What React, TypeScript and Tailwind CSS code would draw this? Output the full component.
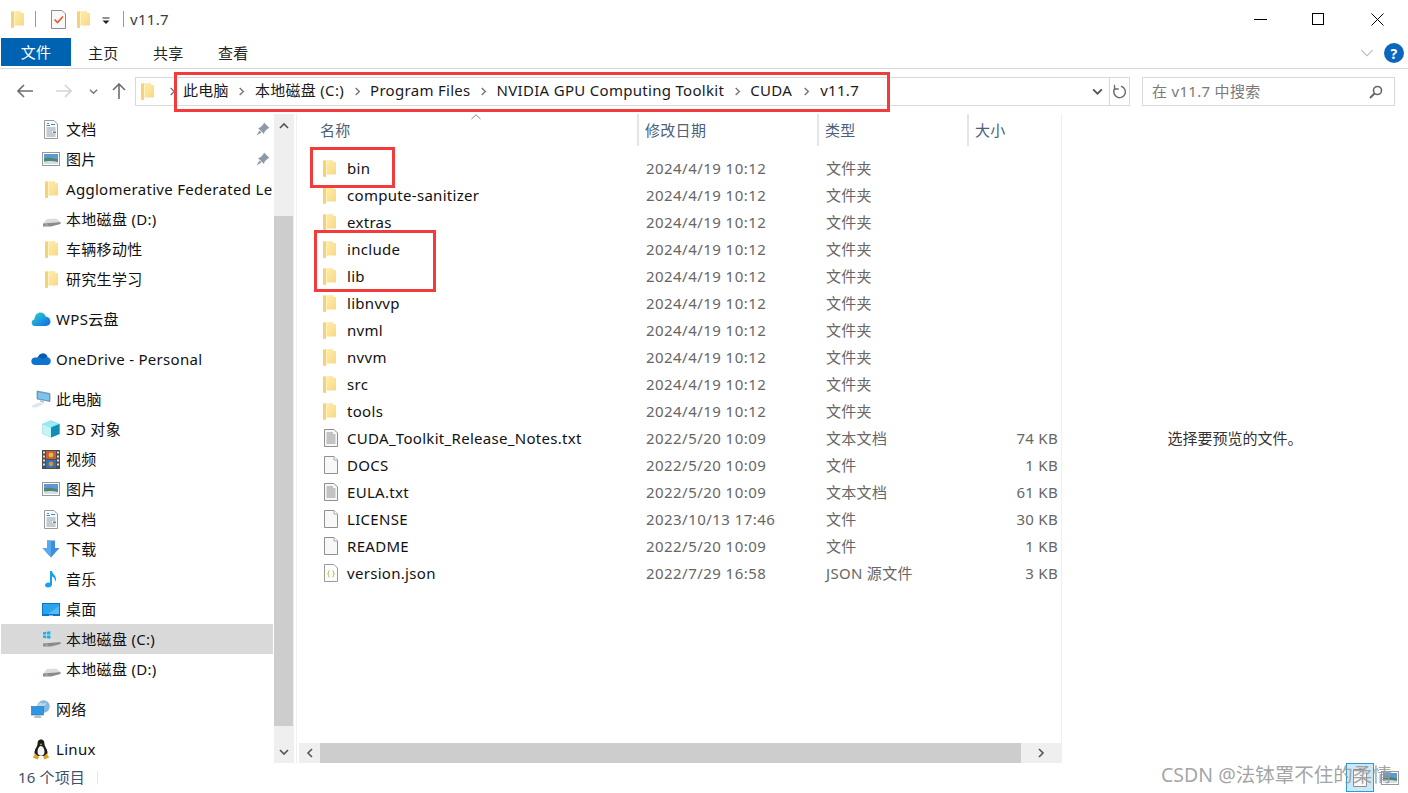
import React from "react";

const Folder = ({ className = "" }: { className?: string }) => (
  <svg width="13" height="17" viewBox="0 0 13 17" className={className}>
    <defs>
      <linearGradient id="fld" x1="0" x2="1" y1="0" y2="1">
        <stop offset="0" stopColor="#fff0b4" />
        <stop offset="1" stopColor="#f7d77f" />
      </linearGradient>
    </defs>
    <path d="M0 .6L9.5 0L10.2 2H13V14.5H3V17L0 16.4Z" fill="url(#fld)" />
    <path d="M0 .6L3 .4V17L0 16.4Z" fill="#f4d27a" />
    <path d="M3 1.5H4V14.5H3Z" fill="#fff3c4" />
  </svg>
);

const DocLines = () => (
  <svg width="16" height="18" viewBox="0 0 16 18">
    <path d="M1.5.5H11L14.5 4V17.5H1.5Z" fill="#f7f7f7" stroke="#8f8f8f" />
    <path d="M3.5 4H10M3.5 6H12.5M3.5 8H12.5M3.5 10H12.5M3.5 12H12.5M3.5 14H12.5" stroke="#8e8e8e" />
  </svg>
);
const DocBlank = () => (
  <svg width="16" height="18" viewBox="0 0 16 18">
    <path d="M1.5.5H11L14.5 4V17.5H1.5Z" fill="#f8f8f8" stroke="#8f8f8f" />
    <path d="M11 .5V4H14.5" fill="#fff" stroke="#a8a8a8" />
  </svg>
);
const DocJson = () => (
  <svg width="16" height="18" viewBox="0 0 16 18">
    <path d="M1.5.5H11L14.5 4V17.5H1.5Z" fill="#fdfdfd" stroke="#9a9a9a" />
    <path d="M6.5 6.5C5.2 6.5 5.6 8 5.5 9C5.4 9.6 5 9.8 4.6 9.8C5 9.9 5.4 10.1 5.5 10.7C5.6 11.7 5.2 13 6.5 13M9.5 6.5C10.8 6.5 10.4 8 10.5 9C10.6 9.6 11 9.8 11.4 9.8C11 9.9 10.6 10.1 10.5 10.7C10.4 11.7 10.8 13 9.5 13" fill="none" stroke="#b8bf3d" />
  </svg>
);
const NavDoc = () => (
  <svg width="16" height="19" viewBox="0 0 16 19">
    <path d="M1.5.5H11L14.5 4V18.5H1.5Z" fill="#fbfbfb" stroke="#9a9a9a" />
    <path d="M4 3.5H6M3.5 5.5H7M8 4.5H12" stroke="#2f8fd8" />
    <path d="M3.5 8H12.5M3.5 10H12.5M3.5 12H9M3.5 14H12.5M3.5 16H12.5" stroke="#8f9aa5" />
    <path d="M10 11.5h3v1.5h-3z" fill="#3c9a8c" />
  </svg>
);
const NavPic = () => (
  <svg width="18" height="14" viewBox="0 0 18 14">
    <rect x=".5" y=".5" width="17" height="13" fill="#fff" stroke="#999" />
    <rect x="2" y="2" width="14" height="10" fill="#5b9bd0" />
    <path d="M2 6.5C6 5 9 5.5 16 7.5V12H2Z" fill="#55816d" />
    <path d="M2 9.5C7 8.5 11 9 16 10V12H2Z" fill="#cfe0ea" />
  </svg>
);
const Drive = ({ win = false }: { win?: boolean }) => (
  <svg width="19" height="17" viewBox="0 0 19 17">
    <path d="M5 8L14 7.5L18.5 11L1 12.5Z" fill="#dcdcdc" />
    <path d="M1 12.5L18.5 11V13L9 15.5H1Z" fill="#8b8b8b" />
    <path d="M3 13.5h3v1H3z" fill="#7fd06f" />
    {win && <path d="M1 1.2L4.2.8V3.6H1ZM5 .7L8.4.2V3.6H5ZM1 4.4H4.2V7.2L1 6.8ZM5 4.4H8.4V7.8L5 7.3Z" fill="#12b2ee" />}
  </svg>
);
const Cloud = () => (
  <svg width="20" height="16" viewBox="0 0 20 16">
    <defs>
      <linearGradient id="wps" x1="0" x2="1" y1="0" y2="1">
        <stop offset="0" stopColor="#2ad7c8" />
        <stop offset="1" stopColor="#1466e8" />
      </linearGradient>
    </defs>
    <path d="M4 15C1.5 15 .5 13 .7 11.2C.9 9.5 2 8.6 3.4 8.4C3.7 4.2 6.5 1.5 9.5 1.5C12.3 1.5 14 3.2 14.7 5.6C17.5 5.8 19.5 8 19.5 10.6C19.5 13.2 17.5 15 15 15Z" fill="url(#wps)" />
  </svg>
);
const OneDrive = () => (
  <svg width="20" height="13" viewBox="0 0 20 13">
    <path d="M7 4C8 1.5 10 .5 12 .5C14.5.5 16 2 16.5 4.2C18.5 4.5 19.8 6 19.8 8C19.8 10.5 18 12 16 12H4.5C2 12 .3 10.5.3 8.3C.3 6 2 4.5 4 4.5C5.2 4.5 6.2 4.6 7 4Z" fill="#0f74cc" />
    <path d="M7 4C8 1.5 10 .5 12 .5C14.5.5 16 2 16.5 4.2C14.5 4.2 13 5 12 6.5C10.5 5 9 4 7 4Z" fill="#0a5cae" />
  </svg>
);
const PC = () => (
  <svg width="20" height="18" viewBox="0 0 20 18">
    <path d="M6 1L19 3.5V11.5L6 9Z" fill="#5aa6dd" stroke="#6f8596" strokeWidth=".7" />
    <path d="M7 2.3L18 4.4V10.4L7 8.3Z" fill="#7cc3ef" />
    <path d="M1 15.5L8 12.5L13 14L5 17.5H1.5Z" fill="#e2e5e8" />
    <path d="M9 10L13 11V13L9 12Z" fill="#c3c9ce" />
  </svg>
);
const Cube = () => (
  <svg width="18" height="18" viewBox="0 0 18 18">
    <path d="M9 .5L17.5 4V14L9 17.5L.5 14V4Z" fill="#35bcd6" />
    <path d="M9 .5L17.5 4L9 7.5L.5 4Z" fill="#9aebf2" />
    <path d="M.5 4L9 7.5V17.5L.5 14Z" fill="#c8f3f5" />
    <path d="M9 7.5L17.5 4V14L9 17.5Z" fill="#0f8fb5" />
  </svg>
);
const Film = () => (
  <svg width="18" height="19" viewBox="0 0 18 19">
    <rect width="18" height="19" fill="#4d4d4d" />
    <path d="M1 1.5h2v2H1zM1 5.5h2v2H1zM1 9.5h2v2H1zM1 13.5h2v2H1zM15 1.5h2v2h-2zM15 5.5h2v2h-2zM15 9.5h2v2h-2zM15 13.5h2v2h-2z" fill="#ddd" />
    <rect x="4" y="1" width="10" height="8" fill="#c95e3d" />
    <rect x="4" y="10" width="10" height="8" fill="#2f73b6" />
    <circle cx="9" cy="5" r="2.4" fill="#e4bb3e" />
    <circle cx="9" cy="14" r="2.4" fill="#d98c39" />
  </svg>
);
const Download = () => (
  <svg width="18" height="18" viewBox="0 0 18 18">
    <path d="M5 .5H13V8H17.5L9 17.5L.5 8H5Z" fill="#3b8fdc" />
    <path d="M5 .5H9V17.5L.5 8H5Z" fill="#59a9ec" />
  </svg>
);
const Music = () => (
  <svg width="14" height="18" viewBox="0 0 14 18">
    <path d="M6 1H8C8.3 4 12 5 12 9C12 10 11.7 11 11 11.5C11.3 8.5 9.5 7 8 6.5V14.5C8 16.3 6 17.5 4 17.5C2.3 17.5 1 16.6 1 15.3C1 13.8 2.7 12.6 4.5 12.6C5 12.6 5.6 12.7 6 13Z" fill="#18a0ee" />
  </svg>
);
const Desktop = () => (
  <svg width="18" height="13" viewBox="0 0 18 13">
    <rect width="18" height="13" fill="#0b76c8" />
    <rect x="1" y="1" width="16" height="10" fill="#2ba4ee" />
    <path d="M17 3L6 11H17Z" fill="#55bcf4" />
    <path d="M7 12h4v.6H7z" fill="#d3ecfb" />
  </svg>
);
const Network = () => (
  <svg width="20" height="19" viewBox="0 0 20 19">
    <circle cx="12.5" cy="6.5" r="6.2" fill="#7fb8e0" />
    <path d="M9 2C11 4 13 3.5 15 2.5C16 4.5 14 6 12 6C10.5 8 11 10 12.5 12.5C9 12 7 9 7 6.5C7 5 8 3 9 2Z" fill="#bcd8e8" />
    <rect x=".5" y="6.5" width="12" height="8.5" fill="#2f97e2" stroke="#1c70b5" strokeWidth=".6" />
    <path d="M4 15H9L10.5 18H3Z" fill="#b8bfc5" />
  </svg>
);
const Tux = () => (
  <svg width="18" height="21" viewBox="0 0 18 21">
    <path d="M9 .5C6.3.5 5.5 2.8 5.6 5C5.7 7 3 9.5 2.6 12.5C2.3 15 3 16 4 17H14C15 16 15.7 15 15.4 12.5C15 9.5 12.3 7 12.4 5C12.5 2.8 11.7.5 9 .5Z" fill="#1a1a1a" />
    <path d="M9 7C7 7 5.5 10 5.5 13C5.5 15.3 7 16.8 9 16.8C11 16.8 12.5 15.3 12.5 13C12.5 10 11 7 9 7Z" fill="#f4f4f4" />
    <path d="M7.5 4.8H10.5L9 6.5Z" fill="#dfa318" />
    <path d="M3.5 14.5L.8 18.5L5.5 20.5L7 18ZM14.5 14.5L17.2 18.5L12.5 20.5L11 18Z" fill="#dfa318" />
  </svg>
);

type Nav = { icon?: React.ReactNode; label: string; pin?: boolean; top?: boolean; gap?: boolean; sel?: boolean };
const nav: Nav[] = [
  { icon: <NavDoc />, label: "文档", pin: true },
  { icon: <NavPic />, label: "图片", pin: true },
  { icon: <Folder />, label: "Agglomerative Federated Le" },
  { icon: <Drive />, label: "本地磁盘 (D:)" },
  { icon: <Folder />, label: "车辆移动性" },
  { icon: <Folder />, label: "研究生学习" },
  { icon: <Cloud />, label: "WPS云盘", top: true, gap: true },
  { icon: <OneDrive />, label: "OneDrive - Personal", top: true, gap: true },
  { icon: <PC />, label: "此电脑", top: true, gap: true },
  { icon: <Cube />, label: "3D 对象" },
  { icon: <Film />, label: "视频" },
  { icon: <NavPic />, label: "图片" },
  { icon: <NavDoc />, label: "文档" },
  { icon: <Download />, label: "下载" },
  { icon: <Music />, label: "音乐" },
  { icon: <Desktop />, label: "桌面" },
  { icon: <Drive win />, label: "本地磁盘 (C:)", sel: true },
  { icon: <Drive />, label: "本地磁盘 (D:)" },
  { icon: <Network />, label: "网络", top: true, gap: true },
  { icon: <Tux />, label: "Linux", top: true, gap: true },
];

const folderNames = ["bin", "compute-sanitizer", "extras", "include", "lib", "libnvvp", "nvml", "nvvm", "src", "tools"];
const files: { icon: React.ReactNode; name: string; date: string; type: string; size: string }[] = [
  ...folderNames.map((n) => ({ icon: <Folder />, name: n, date: "2024/4/19 10:12", type: "文件夹", size: "" })),
  { icon: <DocLines />, name: "CUDA_Toolkit_Release_Notes.txt", date: "2022/5/20 10:09", type: "文本文档", size: "74 KB" },
  { icon: <DocBlank />, name: "DOCS", date: "2022/5/20 10:09", type: "文件", size: "1 KB" },
  { icon: <DocLines />, name: "EULA.txt", date: "2022/5/20 10:09", type: "文本文档", size: "61 KB" },
  { icon: <DocBlank />, name: "LICENSE", date: "2023/10/13 17:46", type: "文件", size: "30 KB" },
  { icon: <DocBlank />, name: "README", date: "2022/5/20 10:09", type: "文件", size: "1 KB" },
  { icon: <DocJson />, name: "version.json", date: "2022/7/29 16:58", type: "JSON 源文件", size: "3 KB" },
];

const crumbs = ["此电脑", "本地磁盘 (C:)", "Program Files", "NVIDIA GPU Computing Toolkit", "CUDA", "v11.7"];

const Chev = ({ d, c = "#666", w = 9, h = 9, sw = 1.6 }: { d: string; c?: string; w?: number; h?: number; sw?: number }) => (
  <svg width={w} height={h} viewBox="0 0 10 10">
    <path d={d} fill="none" stroke={c} strokeWidth={sw} />
  </svg>
);
const RIGHT = "M3 1L7 5L3 9";
const LEFT = "M7 1L3 5L7 9";
const UP = "M1 7L5 3L9 7";
const DOWN = "M1 3L5 7L9 3";

export default function App() {
  return (
    <div className="relative w-[1408px] h-[793px] overflow-hidden bg-white text-[15px] tracking-[0.3px] text-black font-['Noto_Sans','Noto_Sans_CJK_SC',sans-serif]">
      {/* title bar */}
      <div className="h-[38px] flex items-center">
        <div className="ml-[11px] w-[14px] flex"><Folder /></div>
        <div className="ml-[10px] w-px h-[16px] bg-[#9a9a9a]" />
        <div className="ml-[15px] flex">
          <svg width="15" height="19" viewBox="0 0 15 19">
            <path d="M.5.5H11L14.5 4V18.5H.5Z" fill="#f8f8f8" stroke="#8c8c8c" />
            <path d="M3.5 9.5L6.5 12.5L12 6.5" fill="none" stroke="#e8562a" strokeWidth="1.6" />
          </svg>
        </div>
        <div className="ml-[11px] flex"><Folder /></div>
        <svg width="8" height="8" viewBox="0 0 8 8" className="ml-[12px] mt-[3px]">
          <path d="M.5 1h7" stroke="#222" />
          <path d="M.5 3.5h7L4 7Z" fill="#222" />
        </svg>
        <div className="ml-[13px] w-px h-[16px] bg-[#9a9a9a]" />
        <span className="ml-[6px] text-[#3c3c3c]">v11.7</span>
        <div className="ml-auto flex items-center">
          <div className="w-[13px] h-px bg-black mr-[45px]" />
          <div className="w-[12px] h-[12px] border border-black mr-[47px]" />
          <svg width="13" height="13" viewBox="0 0 13 13" className="mr-[24px]">
            <path d="M.5.5L12.5 12.5M12.5.5L.5 12.5" stroke="#000" fill="none" />
          </svg>
        </div>
      </div>
      {/* ribbon */}
      <div className="h-[31px] border-b border-[#d9d9d9] flex items-start">
        <div className="ml-px w-[70px] h-[28px] bg-[#0063b1] text-white flex items-center justify-center">文件</div>
        <span className="ml-[17px] h-[28px] w-[30px] flex items-center pt-[3px] text-[#222] whitespace-nowrap">主页</span>
        <span className="ml-[35px] h-[28px] w-[30px] flex items-center pt-[3px] text-[#222] whitespace-nowrap">共享</span>
        <span className="ml-[35px] h-[28px] w-[30px] flex items-center pt-[3px] text-[#222] whitespace-nowrap">查看</span>
        <div className="ml-auto mt-[5px] mr-[4px] flex items-center">
          <Chev d={DOWN} c="#b5b5b5" w={14} h={14} sw={0.8} />
          <div className="ml-[10px] w-[20px] h-[20px] rounded-full bg-[#0b66bd] text-white text-[14px] font-bold flex items-center justify-center">?</div>
        </div>
      </div>
      {/* address row */}
      <div className="h-[45px] flex items-start pt-[8px]">
        <div className="w-[135px] h-[28px] flex items-center">
          <svg width="16" height="14" viewBox="0 0 16 14" className="ml-[17px]">
            <path d="M7 1L1 7L7 13M1 7H16" fill="none" stroke="#6d6d6d" strokeWidth="1.6" />
          </svg>
          <svg width="16" height="14" viewBox="0 0 16 14" className="ml-[23px]">
            <path d="M9 1L15 7L9 13M0 7H15" fill="none" stroke="#d5d5d5" strokeWidth="1.6" />
          </svg>
          <div className="ml-[17px] flex"><Chev d={DOWN} c="#777" /></div>
          <svg width="14" height="16" viewBox="0 0 14 16" className="ml-[14px]">
            <path d="M1 7L7 1L13 7M7 1V16" fill="none" stroke="#6d6d6d" strokeWidth="1.6" />
          </svg>
        </div>
        <div className="w-[995px] h-[29px] border border-[#d9d9d9] flex items-center relative">
          <div className="ml-[5px] flex"><Folder /></div>
          <div className="ml-[14px] flex"><Chev d={RIGHT} c="#777" /></div>
          <div className="ml-[6px] pb-[2px] flex items-center text-[#1a1a1a]">
            {crumbs.map((c, i) => (
              <React.Fragment key={c}>
                {i > 0 && <span className={`${i === 5 ? "w-[28px]" : "w-[26px]"} flex justify-center pt-[2px]`}><Chev d={RIGHT} c="#777" /></span>}
                <span className="whitespace-nowrap">{c}</span>
              </React.Fragment>
            ))}
          </div>
          <div className="ml-auto flex items-center h-full">
            <div className="mr-[6px] flex"><Chev d={DOWN} c="#555" w={11} h={11} /></div>
            <div className="w-[20px] h-full border-l border-[#d9d9d9] flex items-center justify-center">
              <svg width="15" height="15" viewBox="0 0 15 15">
                <path d="M9 2.2A5.8 5.8 0 1 1 3.4 3.8" fill="none" stroke="#6f6f6f" strokeWidth="1.5" />
                <path d="M2.5 .8V5H6.7" fill="none" stroke="#6f6f6f" strokeWidth="1.3" />
              </svg>
            </div>
          </div>
        </div>
        <div className="ml-[12px] w-[253px] h-[29px] border border-[#d9d9d9] flex items-center pl-[9px] text-[#7a7a7a]">
          <span>在 v11.7 中搜索</span>
          <svg width="14" height="14" viewBox="0 0 14 14" className="ml-auto mr-[11px]">
            <circle cx="8.5" cy="5.5" r="4" fill="none" stroke="#666" strokeWidth="1.6" />
            <path d="M5.5 8.5L1 13" stroke="#666" strokeWidth="2" />
          </svg>
        </div>
      </div>
      {/* main */}
      <div className="h-[649px] flex">
        <div className="w-[274px] overflow-hidden">
          {nav.map((n, i) => (
            <div
              key={i}
              className={`${n.gap ? "mt-[10px]" : ""} ${n.sel ? "bg-[#d9d9d9]" : ""} ml-px w-[272px] h-[30px] flex items-center relative overflow-hidden`}
            >
              <div className={`${n.top ? "ml-[30px]" : "ml-[40px]"} w-[20px] shrink-0 flex justify-center`}>{n.icon}</div>
              <span className="ml-[5px] whitespace-nowrap text-[#111]">{n.label}</span>
              {n.pin && (
                <svg width="14" height="14" viewBox="0 0 14 14" className="absolute left-[255px] top-[8px]">
                  <path d="M8 .5L13.5 6L11.5 6.8L8.5 9.8L8 12L2 6L4.2 5.5L7.2 2.5Z M3.5 8.5L.5 13.5L5.5 10.5Z" fill="#8d99a5" />
                </svg>
              )}
            </div>
          ))}
        </div>
        {/* nav scrollbar */}
        <div className="w-[20px] bg-[#efefef] flex flex-col">
          <div className="h-[102px] flex justify-center pt-[7px]"><Chev d={UP} c="#555" w={10} h={10} /></div>
          <div className="w-[19px] h-[510px] bg-[#cdcdcd]" />
          <div className="h-[37px] flex justify-center items-end pb-[6px]"><Chev d={DOWN} c="#555" w={10} h={10} /></div>
        </div>
        <div className="ml-[2px] w-px bg-[#f0f0f0]" />
        {/* file list */}
        <div className="w-[765px] flex flex-col border-r border-[#f0f0f0]">
          <div className="h-[32px] flex text-[#4c607a] relative">
            <div className="w-[342px] pl-[23px] pt-[5px] border-r-2 border-[#e5e5e5]">名称</div>
            <div className="w-[180px] pl-[6px] pt-[5px] border-r-2 border-[#e5e5e5]">修改日期</div>
            <div className="w-[150px] pl-[6px] pt-[5px] border-r-2 border-[#e5e5e5]">类型</div>
            <div className="pl-[6px] pt-[5px]">大小</div>
            <svg width="10" height="6" viewBox="0 0 10 6" className="absolute left-[174px] top-0">
              <path d="M.5 5L5 .8L9.5 5" fill="none" stroke="#8a8a8a" />
            </svg>
          </div>
          <div className="h-[597px] pt-[8.5px] overflow-hidden">
            {files.map((f) => (
              <div key={f.name} className="h-[27px] flex items-center">
                <div className="ml-[26px] w-[18px] flex">{f.icon}</div>
                <div className="ml-[6px] w-[299px] whitespace-nowrap text-[#111]">{f.name}</div>
                <div className="w-[180px] text-[#666] tracking-[0.45px] whitespace-nowrap">{f.date}</div>
                <div className="w-[150px] text-[#666] whitespace-nowrap">{f.type}</div>
                <div className="w-[82px] text-right text-[#666]">{f.size}</div>
              </div>
            ))}
          </div>
          <div className="h-[20px] ml-[2px] bg-[#efefef] flex items-center">
            <div className="w-[21px] flex justify-center"><Chev d={LEFT} c="#555" w={10} h={10} /></div>
            <div className="w-[701px] h-full bg-[#cdcdcd]" />
            <div className="w-[40px] flex justify-center"><Chev d={RIGHT} c="#555" w={10} h={10} /></div>
          </div>
        </div>
        {/* preview */}
        <div className="flex-1 flex items-center justify-center tracking-normal text-[#333]">选择要预览的文件。</div>
      </div>
      {/* status */}
      <div className="h-[30px] flex items-center pl-[18px] pb-[2px] text-[#3f5068] tracking-[0.15px]">
        <span>16 个项目</span>
        <div className="ml-[12px] w-px h-[13px] bg-[#e5e5e5]" />
      </div>

      {/* annotation boxes */}
      <div className="absolute left-[174px] top-[72px] w-[716px] h-[40px] border-[3px] border-[#f33b3b]" />
      <div className="absolute left-[310px] top-[147px] w-[85px] h-[41px] border-[3px] border-[#f33b3b]" />
      <div className="absolute left-[314px] top-[230px] w-[122px] h-[62px] border-[3px] border-[#f33b3b]" />

      {/* taskbar preview & watermark */}
      <div className="absolute left-[1346px] top-[763px] w-[28px] h-[29px] bg-[#cbe8f6] border border-[#2b9ad6] flex items-center justify-center">
        <DocBlank />
      </div>
      <div className="absolute left-[1381px] top-[771px] flex"><NavPic /></div>
      <div className="absolute left-[1161px] top-[760px] whitespace-nowrap text-[19.5px] tracking-normal text-[#999]/90">CSDN @法钵罩不住的柔情</div>
    </div>
  );
}
